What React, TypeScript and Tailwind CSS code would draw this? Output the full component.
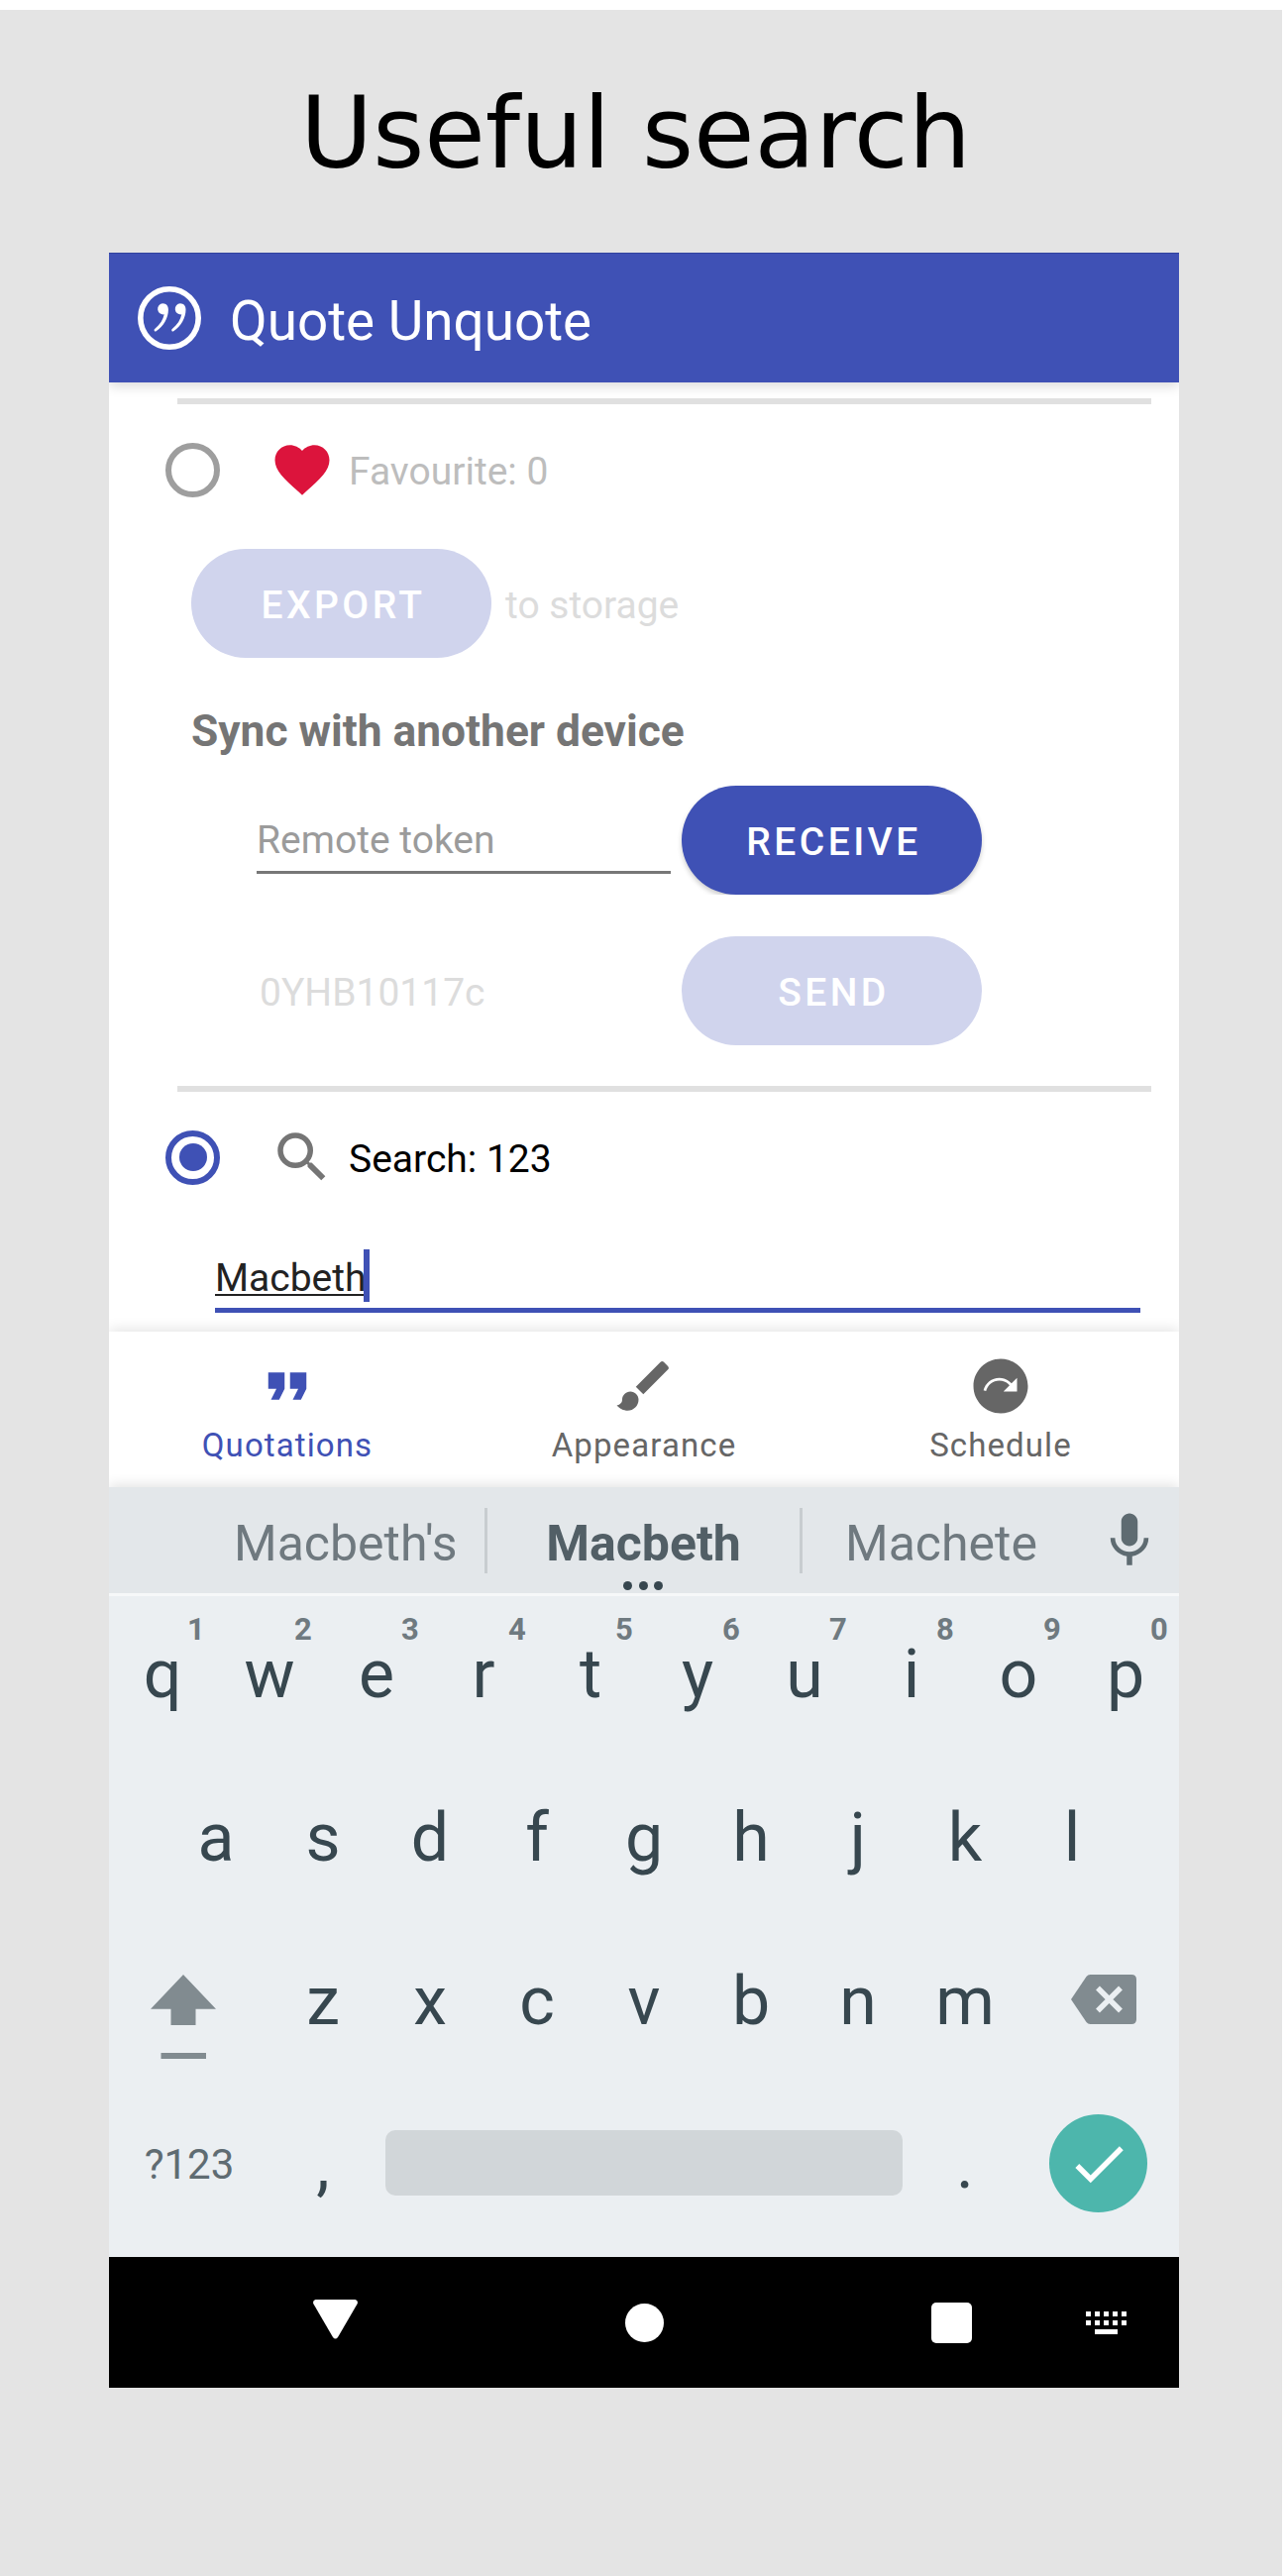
import React from "react";
import { MdBrush, MdCheck, MdFavorite, MdFormatQuote, MdNextPlan, MdSearch } from "react-icons/md";

function Logo() {
  return (
    <svg className="h-[66px] w-[66px]" viewBox="0 0 66 66" fill="none" stroke="white">
      <circle cx="33" cy="33" r="29.2" strokeWidth="5.6" />
      <g fill="white" stroke="none">
        <path d="M26.300 18.200C30 18.200 31.900 21 31.900 24.500C31.900 33 27 41.500 19.600 46.300A1.300 1.300 0 0 1 18.200 44.100C23.500 39.500 26.800 34.500 27.700 29.300A5.600 5.600 0 1 1 26.300 18.200z" />
        <path d="M43.900 18.200C47.600 18.200 49.500 21 49.500 24.500C49.500 33 44.600 41.500 37.200 46.300A1.300 1.300 0 0 1 35.800 44.100C41.100 39.500 44.400 34.500 45.300 29.300A5.600 5.600 0 1 1 43.900 18.200z" />
      </g>
    </svg>
  );
}

function Divider() {
  return <div className="ml-[69px] h-[6px] w-[983px] shrink-0 bg-[#e0e0e0]" />;
}

function Radio({ checked = false }: { checked?: boolean }) {
  return (
    <span
      className={
        checked
          ? "ml-[57px] mr-[50px] flex h-[55px] w-[55px] items-center justify-center rounded-full border-[6px] border-[#3f51b5]"
          : "ml-[57px] mr-[50px] flex h-[55px] w-[55px] items-center justify-center rounded-full border-[6px] border-[#9e9e9e]"
      }
    >
      {checked && <span className="h-[28px] w-[28px] rounded-full bg-[#3f51b5]" />}
    </span>
  );
}

function Pill({ children, disabled = false }: { children: string; disabled?: boolean }) {
  return (
    <button
      className={
        disabled
          ? "h-[110px] w-[303px] rounded-full bg-[#d0d4ed] pl-[4px] pt-[5px] text-[39px] font-medium tracking-[3.44px] text-white"
          : "h-[110px] w-[303px] rounded-full bg-[#3f51b5] pl-[4px] pt-[5px] text-[39px] font-medium tracking-[3.44px] text-white shadow-[0_3px_5px_rgba(0,0,0,0.2)] [clip-path:inset(-10px_-10px_0_-10px)]"
      }
    >
      {children}
    </button>
  );
}

function Tab({ icon, label, active = false }: { icon: React.ReactNode; label: string; active?: boolean }) {
  return (
    <div
      className={
        active
          ? "flex w-[360px] flex-col items-center pt-[22px] text-[#3f51b5]"
          : "flex w-[360px] flex-col items-center pt-[22px] text-[#666666]"
      }
    >
      {icon}
      <span className="mt-[8px] text-[33px] leading-[38px] tracking-[1.1px]">{label}</span>
    </div>
  );
}

function Key({ label, hint }: { label: string; hint?: string }) {
  return (
    <div className="relative w-[108px] text-center">
      {label}
      {hint && (
        <span className="absolute left-[68px] top-[15px] w-[40px] text-center text-[31px] font-bold leading-[37px] text-[#6f7a80]">
          {hint}
        </span>
      )}
    </div>
  );
}

function AppBar() {
  return (
    <header className="relative z-10 flex h-[131px] items-center border-t border-[#32439f] bg-[#3f51b5] pl-[28px] shadow-[0_3px_12px_rgba(0,0,0,0.16)]">
      <Logo />
      <h1 className="ml-[28px] pt-[6px] text-[54.800px] text-white">Quote Unquote</h1>
    </header>
  );
}

function Content() {
  return (
    <main className="flex h-[958px] flex-col bg-white pt-[16px] text-[39px]">
      <Divider />
      <div className="flex h-[132px] items-center">
        <Radio />
        <MdFavorite className="h-[66px] w-[66px] text-[#dc143c]" />
        <span className="ml-[14px] pt-[5px] text-[#bdbdbd]">Favourite: 0</span>
      </div>
      <div className="ml-[83px] mt-[14px] flex h-[110px] items-center">
        <Pill disabled>EXPORT</Pill>
        <span className="ml-[14px] pt-[5px] text-[#dcdcdc]">to storage</span>
      </div>
      <h2 className="ml-[83px] mt-[48px] text-[44.300px] font-bold leading-[52px] text-[#757575]">
        Sync with another device
      </h2>
      <div className="ml-[149px] mt-[29px] flex h-[110px]">
        <div className="mr-[11px] h-[89px] w-[418px] border-b-[3px] border-[#777777] leading-[111px] text-[#9b9b9b]">
          Remote token
        </div>
        <Pill>RECEIVE</Pill>
      </div>
      <div className="ml-[152px] mt-[42px] flex h-[110px] items-center">
        <span className="w-[426px] pt-[5px] text-[#dcdcdc]">0YHB10117c</span>
        <Pill disabled>SEND</Pill>
      </div>
      <div className="h-[41px]" />
      <Divider />
      <div className="flex h-[132px] items-center">
        <Radio checked />
        <MdSearch className="h-[66px] w-[66px] text-[#757575]" />
        <span className="ml-[14px] pt-[5px] text-black">Search: 123</span>
      </div>
      <div className="ml-[107px] flex h-[91px] w-[934px] items-end border-b-[5px] border-[#3f51b5] pb-[6px]">
        <span className="mb-[6px] h-[44px] border-b-2 border-[#222222] leading-[53px] text-[#222222]">
          Macbeth
        </span>
        <span className="-ml-[3px] h-[53px] w-[6px] bg-[#3f51b5]" />
      </div>
    </main>
  );
}

function BottomTabs() {
  return (
    <nav className="relative flex h-[157px] bg-white shadow-[0_-3px_12px_rgba(0,0,0,0.10)]">
      <Tab active icon={<MdFormatQuote className="h-[66px] w-[66px]" />} label="Quotations" />
      <Tab icon={<MdBrush className="h-[66px] w-[66px]" />} label="Appearance" />
      <Tab icon={<MdNextPlan className="h-[66px] w-[66px]" />} label="Schedule" />
    </nav>
  );
}

function Suggestions() {
  return (
    <div className="relative flex h-[110px] items-start border-b-[3px] border-[#f6f8f9] bg-[#e3e7ea] text-[50px] leading-[115px] text-[#6f797f] shadow-[0_-2px_12px_rgba(0,0,0,0.12)] [clip-path:inset(-20px_0_0_0)]">
      <span className="w-[379px] whitespace-nowrap pl-[126px]">Macbeth's</span>
      <span className="mt-[21px] h-[66px] w-[3px] bg-[#c8cdd0]" />
      <span className="relative w-[315px] text-center font-bold text-[#525f66]">
        Macbeth
        <span className="absolute left-[137px] top-[95px] flex gap-[6.500px]">
          <i className="h-[9px] w-[9px] rounded-full bg-[#37474f]" />
          <i className="h-[9px] w-[9px] rounded-full bg-[#37474f]" />
          <i className="h-[9px] w-[9px] rounded-full bg-[#37474f]" />
        </span>
      </span>
      <span className="mt-[21px] h-[66px] w-[3px] bg-[#c8cdd0]" />
      <span className="w-[297px] pl-[43px]">Machete</span>
      <svg className="mt-[21px] h-[66px] w-[66px]" viewBox="0 0 24 24" fill="#5e6b71">
        <path d="M12 14c1.660 0 2.990-1.340 2.990-3L15 5c0-1.660-1.340-3-3-3S9 3.340 9 5v6c0 1.660 1.340 3 3 3zm5.300-3c0 3-2.540 5.100-5.300 5.100S6.700 14 6.700 11H5c0 3.410 2.720 6.230 6 6.720V21h2v-3.280c3.280-.48 6-3.300 6-6.720h-1.700z" />
      </svg>
    </div>
  );
}

function Keyboard() {
  return (
    <section className="h-[667px] bg-[#ebeff2] text-[68px] leading-[167px] text-[#37474f]">
      <div className="flex h-[161px] leading-[159px]">
        {"qwertyuiop".split("").map((k, i) => (
          <Key key={k} label={k} hint={String((i + 1) % 10)} />
        ))}
      </div>
      <div className="flex h-[165px] pl-[54px]">
        {"asdfghjkl".split("").map((k) => (
          <Key key={k} label={k} />
        ))}
      </div>
      <div className="flex h-[165px]">
        <div className="flex w-[162px] justify-center pr-[12px] pt-[56px]">
          <svg className="h-[86px] w-[66px]" viewBox="0 0 66 86" fill="#818b90">
            <path d="M33 0L66 34.700H45.500V51h-25V34.700H0z" />
            <path d="M10.500 79h45.500v6h-45.500z" />
          </svg>
        </div>
        {"zxcvbnm".split("").map((k) => (
          <Key key={k} label={k} />
        ))}
        <div className="flex w-[162px] justify-center pl-[10px] pt-[56px]">
          <svg className="h-[50px] w-[66px]" viewBox="0 0 66 50">
            <path d="M0 25L15.500 2Q17 0 19.500 0H61q5 0 5 5v40q0 5-5 5H19.500Q17 50 15.500 48z" fill="#818b90" />
            <path d="M27 13.500L50 36.500M50 13.500L27 36.500" stroke="#ebeff2" strokeWidth="5.500" />
          </svg>
        </div>
      </div>
      <div className="flex h-[165px]">
        <span className="w-[162px] text-center text-[42px] leading-[165px] text-[#5f6c72]">?123</span>
        <Key label="," />
        <span className="mx-[9px] mt-[48px] h-[66px] w-[522px] rounded-[10px] bg-[#d1d6d9]" />
        <Key label="." />
        <div className="flex w-[161px] justify-center pt-[32px]">
          <span className="flex h-[99px] w-[99px] items-center justify-center rounded-full bg-[#4db6ac]">
            <MdCheck className="h-[66px] w-[66px] text-white" />
          </span>
        </div>
      </div>
    </section>
  );
}

function SystemBar() {
  return (
    <footer className="flex h-[132px] items-start bg-black pt-[43px]">
      <svg className="ml-[206px] h-[40px] w-[45px]" viewBox="0 0 45 40" fill="white">
        <path d="M2.500 0h40q3.500 1 2 4.500L25 38q-2.500 3-5 0L.5 4.500Q-1 1 2.500 0z" />
      </svg>
      <span className="ml-[270px] mt-[4px] h-[39px] w-[39px] rounded-full bg-white" />
      <span className="ml-[270px] mt-[3px] h-[41px] w-[41px] rounded-[5px] bg-white" />
      <div className="ml-[115px] mt-[12px] grid grid-cols-5 gap-x-[4px] gap-y-[4px]">
        {Array.from({ length: 10 }, (_, i) => (
          <i key={i} className="h-[5px] w-[5px] bg-white" />
        ))}
        <i className="col-span-3 col-start-2 h-[5px] bg-white" />
      </div>
    </footer>
  );
}

export default function App() {
  return (
    <div className="h-[2600px] w-[1300px] overflow-hidden bg-white pt-[10px]">
      <div className="h-[2590px] w-[1294px] bg-[#e4e4e4]">
        <div className="h-[245px] pl-[303px] pt-[65px] font-['DejaVu_Sans'] text-[100px] leading-[120px] text-black">
          Useful search
        </div>
        <div className="ml-[110px] w-[1080px] overflow-hidden bg-white font-['Roboto',sans-serif]">
          <AppBar />
          <Content />
          <BottomTabs />
          <Suggestions />
          <Keyboard />
          <SystemBar />
        </div>
      </div>
    </div>
  );
}
